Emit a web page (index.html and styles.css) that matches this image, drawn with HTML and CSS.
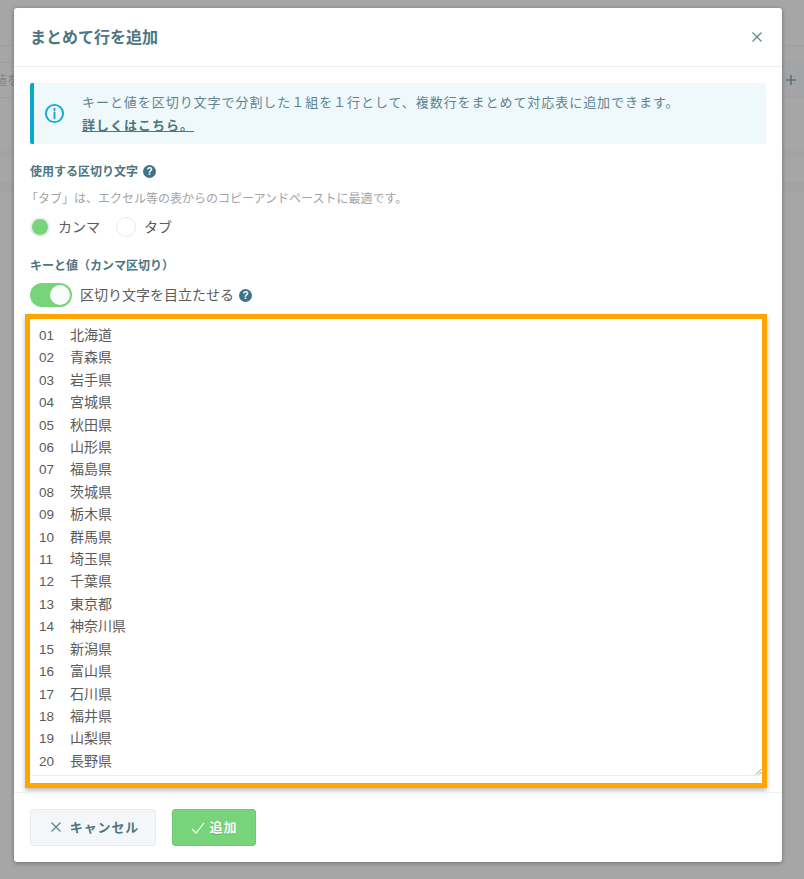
FILE: index.html
```html
<!DOCTYPE html>
<html lang="ja">
<head>
<meta charset="utf-8">
<title>まとめて行を追加</title>
<link rel="stylesheet" href="styles.css">
</head>
<body>
<div class="backdrop">
  <div class="bg-line bg-line-a"></div>
  <div class="bg-line bg-line-b"></div>
  <div class="bg-line bg-line-c"></div>
  <div class="bg-band bg-band-a"></div>
  <div class="bg-band bg-band-b"></div>
  <div class="bg-cell"></div>
  <span class="bg-text">値を</span>
  <svg class="bg-plus" viewBox="0 0 12 12"><path d="M6 1v10M1 6h10"/></svg>
</div>
<div class="modal">
  <header class="modal-head">
    <h1>まとめて行を追加</h1>
    <svg class="close" viewBox="0 0 12 12"><path d="M1.5 1.5l9 9M10.5 1.5l-9 9"/></svg>
  </header>
  <div class="modal-body">
    <div class="info">
      <svg class="info-icon" viewBox="0 0 22 22"><circle cx="11" cy="11" r="9" /><path d="M11 10v6M11 6v1.5"/></svg>
      <div class="info-text">
        <p>キーと値を区切り文字で分割した１組を１行として、複数行をまとめて対応表に追加できます。</p>
        <a href="#">詳しくはこちら。</a>
      </div>
    </div>
    <div class="label sep-label">使用する区切り文字 <span class="help">?</span></div>
    <p class="hint">「タブ」は、エクセル等の表からのコピーアンドペーストに最適です。</p>
    <div class="radios">
      <span class="radio checked"></span><span class="radio-text">カンマ</span>
      <span class="radio"></span><span class="radio-text">タブ</span>
    </div>
    <div class="label kv-label">キーと値（カンマ区切り）</div>
    <div class="toggle-row">
      <span class="toggle"><span class="knob"></span></span>
      <span class="toggle-text">区切り文字を目立たせる</span>
      <span class="help">?</span>
    </div>
    <div class="highlight">
      <div class="textarea">
        <div class="row"><span>01</span><span>北海道</span></div>
        <div class="row"><span>02</span><span>青森県</span></div>
        <div class="row"><span>03</span><span>岩手県</span></div>
        <div class="row"><span>04</span><span>宮城県</span></div>
        <div class="row"><span>05</span><span>秋田県</span></div>
        <div class="row"><span>06</span><span>山形県</span></div>
        <div class="row"><span>07</span><span>福島県</span></div>
        <div class="row"><span>08</span><span>茨城県</span></div>
        <div class="row"><span>09</span><span>栃木県</span></div>
        <div class="row"><span>10</span><span>群馬県</span></div>
        <div class="row"><span>11</span><span>埼玉県</span></div>
        <div class="row"><span>12</span><span>千葉県</span></div>
        <div class="row"><span>13</span><span>東京都</span></div>
        <div class="row"><span>14</span><span>神奈川県</span></div>
        <div class="row"><span>15</span><span>新潟県</span></div>
        <div class="row"><span>16</span><span>富山県</span></div>
        <div class="row"><span>17</span><span>石川県</span></div>
        <div class="row"><span>18</span><span>福井県</span></div>
        <div class="row"><span>19</span><span>山梨県</span></div>
        <div class="row"><span>20</span><span>長野県</span></div>
        <svg class="grip" viewBox="0 0 8 8"><path d="M7.5 1L1 7.5M7.5 4.5L4.5 7.5"/></svg>
      </div>
    </div>
  </div>
  <footer class="modal-foot">
    <button class="btn cancel"><svg viewBox="0 0 12 12"><path d="M1.5 1.5l9 9M10.5 1.5l-9 9"/></svg>キャンセル</button>
    <button class="btn add"><svg viewBox="0 0 14 12"><path d="M1 7l4 4 8-10"/></svg>追加</button>
  </footer>
</div>
</body>
</html>
```
FILE: styles.css
```css
* { box-sizing: border-box; }
html, body { margin: 0; height: 100%; }
body {
  width: 804px;
  height: 879px;
  overflow: hidden;
  position: relative;
  background: #a6a6a6;
  font-family: "Noto Sans CJK JP", "Noto Sans", sans-serif;
  color: #5b5b5b;
  padding: 8px 22px 17px 14px;
}
.backdrop { position: absolute; inset: 0; overflow: hidden; }
.bg-line { position: absolute; left: 0; right: 0; height: 1px; background: #9e9f9f; }
.bg-line-a { top: 45px; }
.bg-line-b { top: 62px; }
.bg-line-c { top: 97px; }
.bg-band { position: absolute; left: 0; right: 0; background: #a2a3a3; }
.bg-band-a { top: 149px; height: 8px; }
.bg-band-b { top: 182px; height: 10px; }
.bg-cell { position: absolute; left: 782px; right: 0; top: 62px; height: 35px; background: #a2a4a5; }
.bg-text { position: absolute; left: -6px; top: 71px; font-size: 13px; line-height: 18px; color: #858585; }
.bg-plus { position: absolute; left: 785px; top: 74px; width: 12px; height: 12px; fill: none; stroke: #5c727a; stroke-width: 1.6; }
.modal {
  position: relative;
  width: 768px;
  height: 854px;
  background: #fff;
  border-radius: 3px;
  box-shadow: 0 1px 4px rgba(0,0,0,.35);
  display: flex;
  flex-direction: column;
}
.modal-head {
  height: 59px;
  border-bottom: 1px solid #e9f1f2;
  padding: 0 19px 0 16px;
  display: flex;
  align-items: center;
  justify-content: space-between;
  flex: none;
}
.modal-head h1 { margin: 0 0 2px; font-size: 16px; font-weight: 700; color: #4c7682; }
.close { width: 12px; height: 12px; fill: none; stroke: #5d8590; stroke-width: 1.2; margin-bottom: 1px; }
.modal-body { flex: 1; padding: 16px 16px 0; min-height: 0; }
.info {
  height: 61px;
  background: #eff9fc;
  border-left: 4px solid #09a6cf;
  border-radius: 2px;
  display: flex;
  align-items: center;
  padding-left: 10px;
}
.info-icon { width: 21px; height: 21px; fill: none; stroke: #14a9d0; stroke-width: 2; flex: none; stroke-linecap: round; }
.info-text { margin: -1px 0 0 17px; font-size: 13px; line-height: 23px; color: #5d8590; letter-spacing: .95px; }
.info-text p { margin: 0; white-space: nowrap; }
.info-text a { color: #4c7682; font-weight: 700; letter-spacing: 1px; }
.label { font-size: 12px; font-weight: 700; color: #4c7682; line-height: 16px; display: flex; align-items: center; }
.sep-label { margin-top: 19px; gap: 5px; }
.help {
  width: 13px; height: 13px; border-radius: 50%; background: #3d7382; color: #fff;
  font: 700 10px/13px "Liberation Sans", sans-serif; text-align: center; display: inline-block; flex: none;
}
.hint { margin: 11px 0 0 -4px; font-size: 12px; line-height: 16px; color: #a3a3a3; white-space: nowrap; }
.radios { margin-top: 11px; height: 20px; display: flex; align-items: center; font-size: 14px; color: #5b5b5b; }
.radio { width: 20px; height: 20px; border-radius: 50%; border: 1px solid #e3ecee; background: #fff; flex: none; }
.radio.checked { background: #78d47a; border: 2px solid #e8eeee; }
.radio-text { margin: -2px 16px 0 8px; }
.label.kv-label { margin-top: 20px; }
.toggle-row { margin-top: 10px; height: 24px; display: flex; align-items: center; font-size: 14px; }
.toggle { width: 42px; height: 24px; border-radius: 12px; background: #78d47a; position: relative; flex: none; }
.knob { position: absolute; right: 2px; top: 2px; width: 20px; height: 20px; border-radius: 50%; background: #f9fbfc; }
.toggle-text { margin: -2px 5px 0 8px; }
.highlight {
  margin: 7px -1px 0 -5px;
  height: 474px;
  border: 5px solid #ffa500;
  box-shadow: 0 3px 5px rgba(0,0,0,.25);
  padding: 0 0 7px 0;
  background: #fff;
}
.textarea {
  position: relative;
  height: 100%;
  border-bottom: 1px solid #e6edf0;
  border-radius: 3px;
  padding: 4px 9px;
  font-size: 14px;
  color: #5b5b5b;
}
.row { height: 22.42px; line-height: 22.42px; display: flex; align-items: baseline; }
.row span:first-child { width: 31px; font-family: "Liberation Sans", sans-serif; font-size: 13.5px; }
.grip { position: absolute; right: 0; bottom: 0; width: 7px; height: 7px; fill: none; stroke: #8a8a8a; stroke-width: 1; }
.modal-foot {
  height: 70px;
  flex: none;
  border-top: 1px solid #edf3f4;
  padding: 16px 16px 0;
  display: flex;
  gap: 16px;
  align-items: flex-start;
}
.btn {
  height: 37px;
  border-radius: 3px;
  font-family: inherit;
  font-size: 13px;
  font-weight: 700;
  display: flex;
  align-items: center;
  justify-content: center;
  padding: 0 0 2px;
}
.cancel { width: 126px; background: #f4f7f9; border: 1px solid #e6edf0; color: #4c7682; letter-spacing: .9px; padding-left: 3px; }
.cancel svg { width: 12px; height: 12px; fill: none; stroke: #5d8590; stroke-width: 1.2; margin-right: 8px; }
.add { width: 84px; background: #78d47a; border: 1px solid #6fcb72; color: #fff; letter-spacing: 1px; text-shadow: 0 1px 1px rgba(0,0,0,.2); padding-left: 1px; }
.add svg { width: 14px; height: 12px; fill: none; stroke: #fff; stroke-width: 1.2; margin: 2px 4px 0 0; }
```
